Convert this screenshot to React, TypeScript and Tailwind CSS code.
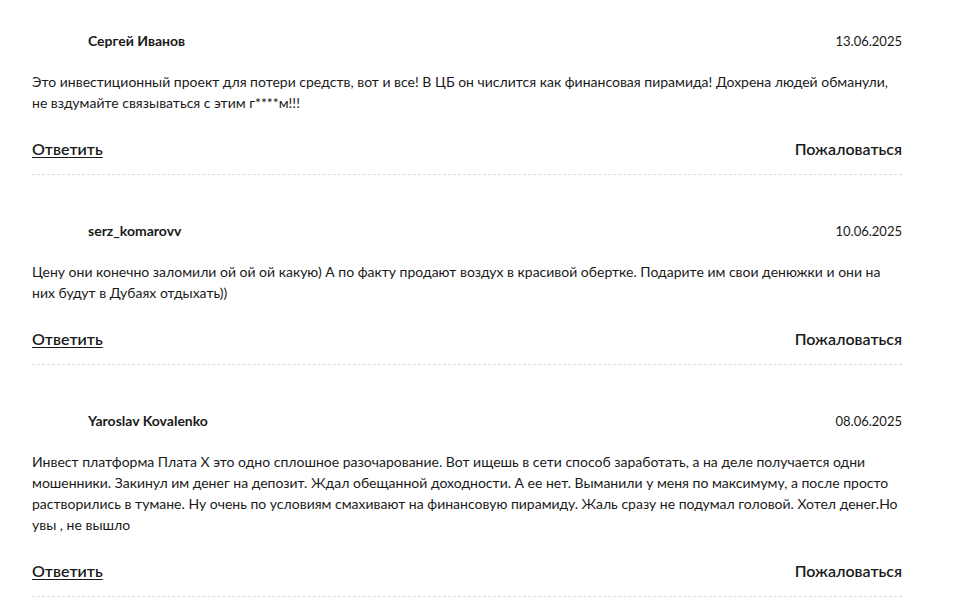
import React from "react";

const comments = [
  {
    name: "Сергей Иванов",
    date: "13.06.2025",
    text: "Это инвестиционный проект для потери средств, вот и все! В ЦБ он числится как финансовая пирамида! Дохрена людей обманули, не вздумайте связываться с этим г****м!!!",
  },
  {
    name: "serz_komarovv",
    date: "10.06.2025",
    text: "Цену они конечно заломили ой ой ой какую) А по факту продают воздух в красивой обертке. Подарите им свои денюжки и они на них будут в Дубаях отдыхать))",
  },
  {
    name: "Yaroslav Kovalenko",
    date: "08.06.2025",
    text: "Инвест платформа Плата Х это одно сплошное разочарование. Вот ищешь в сети способ заработать, а на деле получается одни мошенники. Закинул им денег на депозит. Ждал обещанной доходности. А ее нет. Выманили у меня по максимуму, а после просто растворились в тумане. Ну очень по условиям смахивают на финансовую пирамиду. Жаль сразу не подумал головой. Хотел денег.Но увы , не вышло",
  },
];

export default function App() {
  return (
    <div
      className="w-[972px] h-[610px] overflow-hidden bg-white text-[#1a1a1a]"
      style={{ fontFamily: "Lato, 'Noto Sans', sans-serif" }}
    >
      <div className="ml-[32px] w-[870px] pt-[31px]">
        {comments.map((c, i) => (
          <div
            key={i}
            className="mb-[46px] border-b border-dashed border-[#dcdcdc] pb-[13px]"
          >
            <div className="flex items-center justify-between h-[20px]">
              <span className="pl-[56px] text-[14px] font-bold leading-[20px]">
                {c.name}
              </span>
              <span className="text-[13px] leading-[20px]">{c.date}</span>
            </div>
            <p className="mt-[20px] text-[14px] leading-[21px]">{c.text}</p>
            <div className="mt-[24px] flex items-center justify-between h-[24px]">
              <a className="text-[16px] font-semibold leading-[24px] underline underline-offset-2 cursor-pointer">
                Ответить
              </a>
              <span className="text-[16px] font-semibold leading-[24px] cursor-pointer">
                Пожаловаться
              </span>
            </div>
          </div>
        ))}
      </div>
    </div>
  );
}
